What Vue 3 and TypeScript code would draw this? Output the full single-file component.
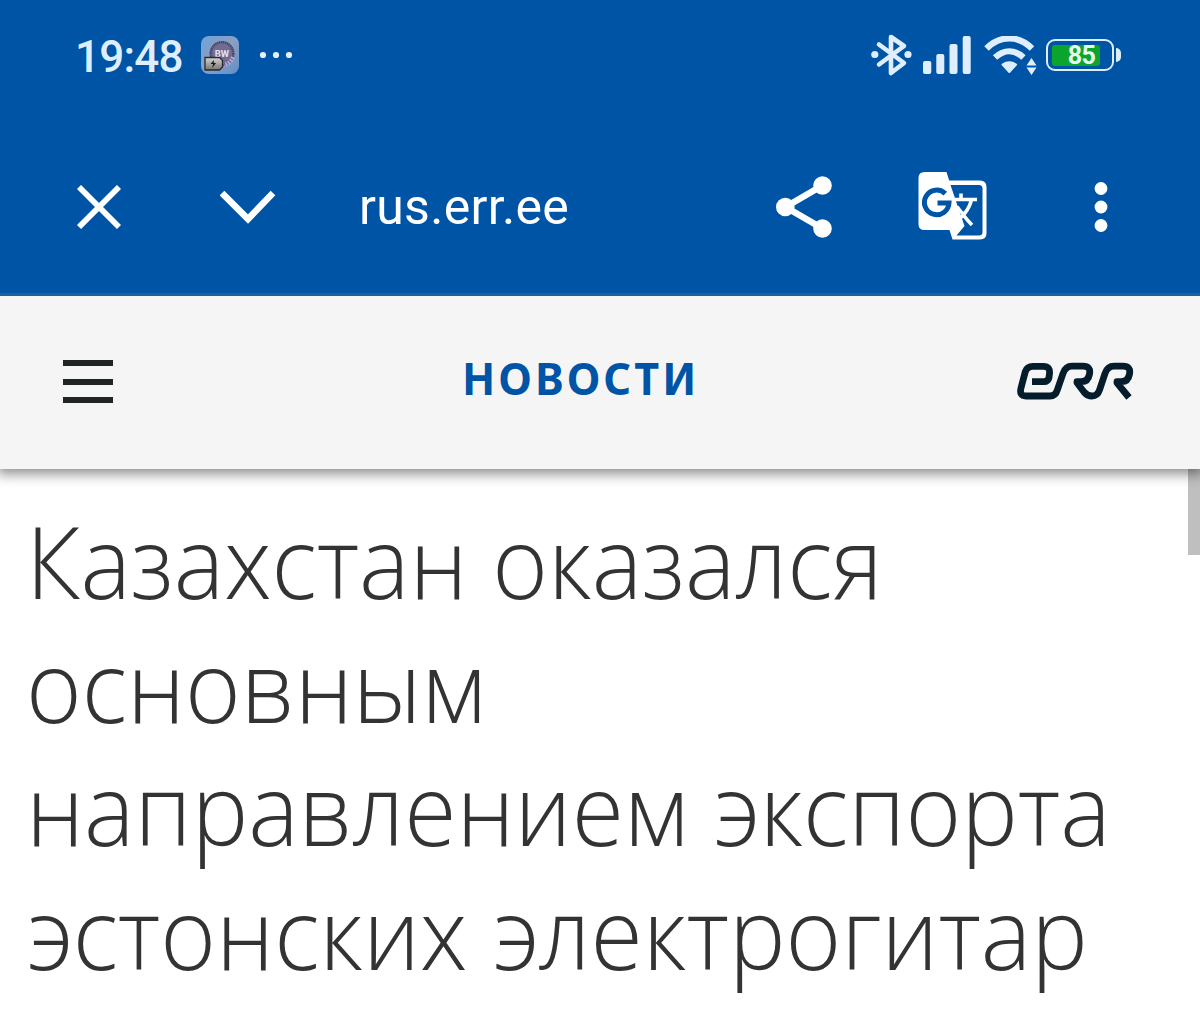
<script setup lang="ts">
const time = '19:48'
const battery = 85
const host = 'rus.err.ee'
const section = 'НОВОСТИ'
const headline: string[] = [
  'Казахстан оказался',
  'основным',
  'направлением экспорта',
  'эстонских электрогитар',
]
</script>

<template>
  <main class="screen">
    <div class="browser">
      <div class="status">
        <span class="time">{{ time }}</span>
        <svg class="app-icon" width="38" height="38" viewBox="0 0 38 38">
          <defs>
            <linearGradient id="tile" x1="0" y1="0" x2="1" y2="1">
              <stop offset="0" stop-color="#6fa3d6" />
              <stop offset=".5" stop-color="#8a9fc4" />
              <stop offset="1" stop-color="#5f8fca" />
            </linearGradient>
            <linearGradient id="cell" x1="0" y1="0" x2="0" y2="1">
              <stop offset="0" stop-color="#d5d3d2" />
              <stop offset="1" stop-color="#77736f" />
            </linearGradient>
          </defs>
          <rect width="38" height="38" rx="8" fill="url(#tile)" />
          <circle cx="21" cy="17.500" r="12.500" fill="#706d94" />
          <circle cx="21" cy="17.500" r="11.300" fill="none" stroke="#46435f" stroke-width="2.400" stroke-dasharray="1.200 .8" />
          <path d="M32 21a12 12 0 0 1-9 8" fill="none" stroke="#b9a5d0" stroke-width="4" stroke-dasharray="2 1" />
          <text x="21" y="20.500" text-anchor="middle" class="app-text">BW</text>
          <path d="M4 21.500h14.500l3 3v6.500l-3 3H4z" fill="url(#cell)" stroke="#292a2e" stroke-width="1.300" />
          <path d="m13 24-3.500 4h2.600l-1 4 4-5h-2.500z" fill="#17181b" />
        </svg>
        <svg class="more-dots" width="34" height="8" viewBox="0 0 34 8" fill="#e6f1ff">
          <circle cx="4" cy="4" r="3.100" /><circle cx="17" cy="4" r="3.100" /><circle cx="30" cy="4" r="3.100" />
        </svg>
        <svg class="bluetooth" width="42" height="46" viewBox="0 0 42 46">
          <path d="M8 12.500 33 31 20 41V5l13 9L8 32.500" fill="none" stroke="#dfeeff" stroke-width="4.600" stroke-linecap="round" stroke-linejoin="round" />
          <circle cx="3.800" cy="22.500" r="3.600" fill="#dfeeff" /><circle cx="37" cy="22.500" r="3.600" fill="#dfeeff" />
        </svg>
        <svg class="signal" width="48" height="38" viewBox="0 0 48 38" fill="#dfeeff">
          <rect y="25" width="8.300" height="13" rx="2" /><rect x="13.300" y="18" width="8" height="20" rx="2" />
          <rect x="26.500" y="8" width="8" height="30" rx="2" /><rect x="39.700" width="8" height="38" rx="2" />
        </svg>
        <svg class="wifi" width="53" height="40" viewBox="0 0 53 40">
          <path d="M2.500 12.500C16-1 34.500-1 48 12.500M11 21.500c9-8.300 19.500-8.300 28.500 0" fill="none" stroke="#dfeeff" stroke-width="6.300" />
          <path d="M18.500 28.500q6.800-4.500 13.600 0L25.300 36z" fill="#dfeeff" stroke="#dfeeff" stroke-width="2" stroke-linejoin="round" />
          <path d="m47.500 22 5 7.500h-10zM47.500 39l5-7.500h-10z" fill="#dfeeff" />
        </svg>
        <span class="battery"><span class="charge" :style="{ width: battery + '%' }"></span><b>{{ battery }}</b></span>
        <span class="cap"></span>
      </div>

      <div class="toolbar">
        <svg class="close" width="44" height="44" viewBox="0 0 44 44">
          <path d="m2 2 40 40M42 2 2 42" stroke="#fff" stroke-width="5.800" />
        </svg>
        <svg class="chevron" width="56" height="34" viewBox="0 0 56 34">
          <path d="m2 3 26 26L53 3" fill="none" stroke="#fff" stroke-width="6.600" />
        </svg>
        <span class="host">{{ host }}</span>
        <svg class="share" width="56" height="62" viewBox="0 0 56 62">
          <path d="M46.500 9.500 9.500 31l37 21.500" fill="none" stroke="#fff" stroke-width="6.500" />
          <g fill="#fff"><circle cx="46.500" cy="9.500" r="9.300" /><circle cx="9.300" cy="31" r="9.300" /><circle cx="46.500" cy="52.500" r="9.300" /></g>
        </svg>
        <svg class="translate" width="70" height="70" viewBox="0 0 70 70">
          <path d="M6.500 1H28.500l2.700 8.500H62q6.500 0 6.500 6.500v46q0 6.500-6.500 6.500H34.500L31.500 59H6.500Q.5 59 .5 53V7q0-6 6-6z" fill="#fff" />
          <path d="M32.500 14H61q3.500 0 3.500 3.500V61q0 3.500-3.500 3.500H38.500L46.500 55z" fill="#0054a6" />
          <path d="M27.300 22.600A12.300 12.300 0 1 0 31 32H19.500" fill="none" stroke="#0054a6" stroke-width="5" />
          <path d="M34.500 28.500H59M43 22.500v6M53.500 29q-3 11-12 19M40 35q5 10 14 19" fill="none" stroke="#fff" stroke-width="3.600" />
          <path d="M38.500 31.500H49q-1.500 5-4.500 8.500-3-3.500-6-8.500z" fill="#0054a6" />
        </svg>
        <svg class="menu" width="14" height="50" viewBox="0 0 14 50" fill="#fff">
          <circle cx="7" cy="6.500" r="6.400" /><circle cx="7" cy="25" r="6.400" /><circle cx="7" cy="43.500" r="6.400" />
        </svg>
      </div>
    </div>

    <header class="site">
      <div class="burger"><i></i><i></i><i></i></div>
      <span class="section">{{ section }}</span>
      <svg class="logo" width="118" height="40" viewBox="0 0 118 40">
        <path d="M15 20.600H27q4 0 5-4l.5-4q.8-7.300-6-7.300H16q-6 0-7.700 5.300L4 27q-2 8 5 8h24q5.500 0 7.300-6L46 12.500Q48.500 5.200 55 5.200H66q8 0 6.500 7.800-1.300 7.600-8 7.600H60v1.200L67 31q3.300 4 8 4 5.500 0 7.500-6L88 12.500Q90.500 5.200 97 5.200h9q8 0 6.500 7.800-1.300 7.600-8 7.600H100v1.200L112 36.500" fill="none" stroke="#051c2c" stroke-width="6.800" stroke-linejoin="round" />
      </svg>
    </header>

    <article class="article">
      <h1>
        <span v-for="line in headline" :key="line">{{ line }}</span>
      </h1>
      <div class="scrollbar"></div>
    </article>
  </main>
</template>

<style>
body { margin: 0; overflow: hidden; }
</style>

<style scoped>
.screen { width: 1200px; height: 1012px; display: flex; flex-direction: column; overflow: hidden; background: #fff; }
svg { display: block; flex: none; }
.browser { position: relative; z-index: 2; box-sizing: border-box; height: 296px; background: #0054a6; border-bottom: 3px solid #1d609e; color: #fff; flex: none; }
.status { height: 110px; display: flex; align-items: center; }
.time { width: 126px; padding-left: 75px; margin-right: 1px; font: 500 44px/52px Roboto, sans-serif; letter-spacing: -.8px; color: #dfeeff; margin-top: 3px; }
.app-icon { margin-left: -1px; }
.app-text { font: bold 9.500px Roboto, sans-serif; fill: #e3e4f0; }
.more-dots { margin-left: 20px; }
.bluetooth { margin-left: 578px; }
.signal { margin-left: 10px; }
.wifi { margin-left: 13px; margin-top: 1px; }
.battery { box-sizing: border-box; width: 68px; height: 32px; margin-left: 9px; border: 2px solid #dfeeff; border-radius: 9px; padding: 4px 3px 4px 4px; display: grid; }
.charge, .battery b { grid-area: 1 / 1; }
.charge { background: #0ba52d; border-radius: 3px; }
.battery b { text-align: center; padding-left: 2px; font: 700 25px/21px Roboto, sans-serif; letter-spacing: -.5px; color: #e6fff0; }
.cap { width: 5px; height: 14px; margin-left: 2px; border-radius: 0 7px 7px 0; background: #dfeeff; }
.toolbar { height: 183px; display: flex; align-items: center; padding-left: 77px; }
.close, .chevron, .host, .share, .menu { margin-top: 10px; }
.chevron { margin-left: 99px; }
.host { width: 417px; margin-left: 83px; font: 400 50px/56px Roboto, sans-serif; letter-spacing: .3px; }
.translate { margin: 9px 0 0 86px; }
.menu { margin-left: 106px; }
.site { position: relative; z-index: 1; height: 173px; flex: none; background: #f5f5f5; box-shadow: 0 2px 12px 3px rgba(0, 0, 0, .45); display: flex; align-items: flex-start; }
.burger { margin: 64px 0 0 63px; width: 50px; display: grid; gap: 12.500px; }
.burger i { height: 6px; background: #202423; }
.section { width: 553px; margin: 52px 0 0 349px; font: 700 45px/60px "Noto Sans", sans-serif; letter-spacing: 3.200px; color: #0054a6; transform: scaleX(.96); transform-origin: left; }
.logo { margin: 65px 0 0 2px; }
.article { flex: 1; display: flex; justify-content: space-between; align-items: flex-start; }
h1 { width: 1160px; margin: 30px 0 0 26px; font: 300 100px/123.600px "Open Sans", sans-serif; color: #333; transform: scaleX(.951); transform-origin: left; }
h1 span { display: block; white-space: nowrap; }
.scrollbar { width: 12px; height: 86px; background: #bfbfbf; flex: none; }
</style>
